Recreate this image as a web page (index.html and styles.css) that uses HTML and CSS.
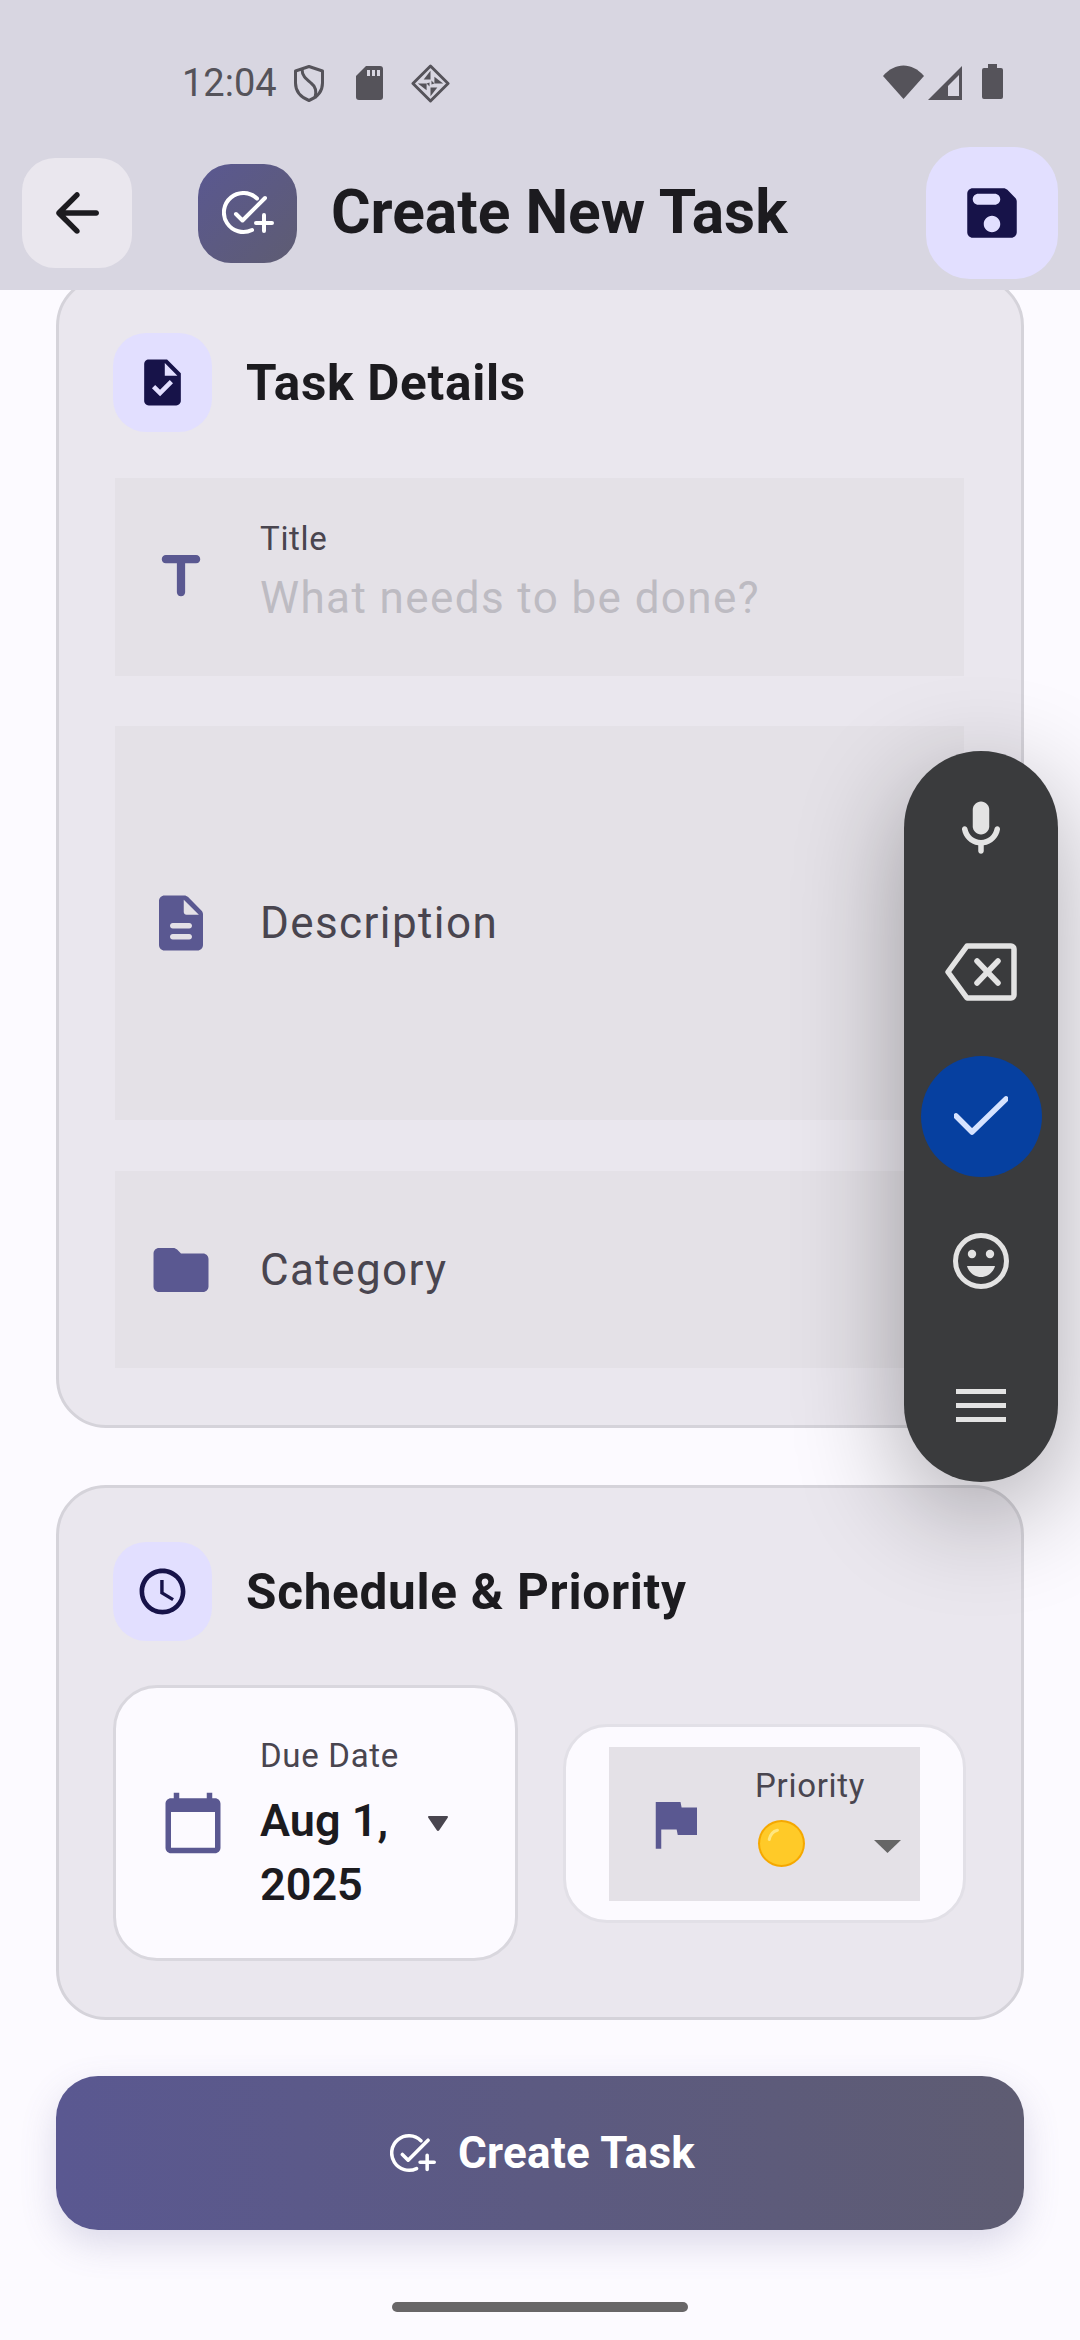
FILE: index.html
```html
<!DOCTYPE html>
<html lang="en">
<head>
  <meta charset="UTF-8">
  <title>Create New Task</title>
  <link rel="stylesheet" href="styles.css">
</head>
<body>
  <header class="top">
    <div class="status">
      <span class="clock">12:04</span>
      <svg class="st-shield" viewBox="0 0 30 37"><path d="M15 1.500 28.500 6v12c0 8.500-6 14.500-13.500 17.500C7.500 32.500 1.500 26.500 1.500 18V6Z" fill="none" stroke="#55535a" stroke-width="3" stroke-linejoin="round"/><path d="M8 4c0 7 4 10 9 14 4 3 6 8 4 15" fill="none" stroke="#55535a" stroke-width="3"/></svg>
      <svg class="st-sd" viewBox="0 0 27 34"><path d="M10 0h14a3 3 0 0 1 3 3v28a3 3 0 0 1-3 3H3a3 3 0 0 1-3-3V10Z" fill="#55535a"/><path d="M11 4h3v6h-3zM16 4h3v6h-3zM21 4h3v6h-3z" fill="#d8d6e1"/></svg>
      <svg class="st-diamond" viewBox="0 0 40 40"><path d="M20 2 38 20 20 38 2 20Z" fill="none" stroke="#55535a" stroke-width="3" stroke-linejoin="round"/><path d="M20 7v9h-7ZM33 20h-9v-7ZM20 33v-9h7ZM7 20h9v7Z" fill="#55535a"/><path d="M21 17l3 3-3 1ZM19 23l-3-3 3-1Z" fill="#55535a"/></svg>
      <span class="status-gap"></span>
      <svg class="st-wifi" viewBox="0 0 41 34"><path d="M0 11C12-3 29-3 41 11L20.500 34Z" fill="#55535a"/></svg>
      <svg class="st-signal" viewBox="0 0 34 34"><path d="M34 0v34H0Z" fill="#55535a"/><path d="M20 20 31 9v21H20Z" fill="#d8d6e1"/></svg>
      <svg class="st-battery" viewBox="0 0 21 35"><path d="M6 0h9v4h4a2 2 0 0 1 2 2v27a2 2 0 0 1-2 2H2a2 2 0 0 1-2-2V6a2 2 0 0 1 2-2h4Z" fill="#55535a"/></svg>
    </div>
    <div class="toolbar">
      <div class="back">
        <svg class="ic66" viewBox="0 0 24 24"><path fill="#1c1b1f" d="M19 11H7.830l4.880-4.880c.39-.39.39-1.030 0-1.420-.39-.39-1.020-.39-1.410 0l-6.590 6.590c-.39.39-.39 1.020 0 1.410l6.590 6.590c.39.39 1.020.39 1.410 0 .39-.39.39-1.020 0-1.410L7.830 13H19c.55 0 1-.45 1-1s-.45-1-1-1z"/></svg>
      </div>
      <div class="logo">
        <svg class="add-task" viewBox="0 0 52 44"><path d="M35 7.500A19.500 19.500 0 1 0 30 39M14 23l6.500 6.500L43 7M34 32h16M42 24v16" fill="none" stroke="#fff" stroke-width="4" stroke-linecap="round" stroke-linejoin="round"/></svg>
      </div>
      <h1 class="page-title">Create New Task</h1>
      <div class="save">
        <svg class="ic66" viewBox="0 0 24 24"><path fill="#171349" d="M17.590 3.590c-.38-.38-.89-.59-1.420-.59H5c-1.110 0-2 .9-2 2v14c0 1.100.9 2 2 2h14c1.100 0 2-.9 2-2V7.830c0-.53-.21-1.040-.59-1.410l-2.820-2.830zM12 19c-1.660 0-3-1.340-3-3s1.340-3 3-3 3 1.340 3 3-1.340 3-3 3zm1-10H7c-1.100 0-2-.9-2-2s.9-2 2-2h6c1.100 0 2 .9 2 2s-.9 2-2 2z"/></svg>
      </div>
    </div>
  </header>

  <main class="content">
    <section class="card card-details">
      <div class="card-head">
        <div class="head-icon">
          <svg class="ic55" viewBox="0 0 24 24"><path fill="#171349" d="M14 2H6c-1.100 0-1.990.9-1.990 2L4 20c0 1.100.89 2 1.990 2H18c1.100 0 2-.9 2-2V8l-6-6zm-3.060 16L7.400 14.460l1.410-1.410 2.120 2.120 4.240-4.240 1.410 1.410L10.940 18zM13 9V3.500L18.500 9H13z"/></svg>
        </div>
        <h2>Task Details</h2>
      </div>

      <div class="field field-title">
        <svg class="ic66 field-icon" viewBox="0 0 24 24"><path d="M5 5.500C5 6.330 5.670 7 6.500 7h4v10.500c0 .83.67 1.500 1.500 1.500s1.500-.67 1.500-1.500V7h4c.83 0 1.500-.67 1.500-1.500S18.330 4 17.500 4h-11C5.670 4 5 4.670 5 5.500z"/></svg>
        <div class="title-text">
          <div class="small-label">Title</div>
          <div class="hint">What needs to be done?</div>
        </div>
      </div>

      <div class="field field-desc">
        <svg class="ic66 field-icon" viewBox="0 0 24 24"><path d="M14.590 2.590c-.38-.38-.89-.59-1.420-.59H6c-1.100 0-2 .9-2 2v16c0 1.100.89 2 1.990 2H18c1.100 0 2-.9 2-2V8.830c0-.53-.21-1.040-.59-1.410l-4.820-4.830zM15 18H9c-.55 0-1-.45-1-1s.45-1 1-1h6c.55 0 1 .45 1 1s-.45 1-1 1zm0-4H9c-.55 0-1-.45-1-1s.45-1 1-1h6c.55 0 1 .45 1 1s-.45 1-1 1zm-2-6V3.500L18.500 9H14c-.55 0-1-.45-1-1z"/></svg>
        <div class="field-text">Description</div>
      </div>

      <div class="field field-cat">
        <svg class="ic66 field-icon" viewBox="0 0 24 24"><path d="M10.590 4.590C10.210 4.210 9.700 4 9.170 4H4c-1.100 0-1.990.9-1.990 2L2 18c0 1.100.9 2 2 2h16c1.100 0 2-.9 2-2V8c0-1.100-.9-2-2-2h-8l-1.410-1.410z"/></svg>
        <div class="field-text">Category</div>
      </div>
    </section>

    <section class="card card-schedule">
      <div class="card-head">
        <div class="head-icon">
          <svg class="ic55" viewBox="0 0 24 24"><path fill="#171349" d="M11.990 2C6.470 2 2 6.480 2 12s4.470 10 9.990 10C17.520 22 22 17.520 22 12S17.520 2 11.990 2zM12 20c-4.420 0-8-3.580-8-8s3.580-8 8-8 8 3.580 8 8-3.580 8-8 8zm.5-13H11v6l5.250 3.150.75-1.230-4.500-2.670z"/></svg>
        </div>
        <h2>Schedule &amp; Priority</h2>
      </div>

      <div class="pick-row">
        <div class="pick pick-date">
          <svg class="ic66 date-icon" viewBox="0 0 24 24"><path fill="#5a5891" d="M20 3h-1V1h-2v2H7V1H5v2H4c-1.100 0-2 .9-2 2v16c0 1.100.9 2 2 2h16c1.100 0 2-.9 2-2V5c0-1.100-.9-2-2-2zm0 18H4V8h16v13z"/></svg>
          <div class="date-text">
            <div class="small-label">Due Date</div>
            <div class="date-value">Aug 1, 2025</div>
          </div>
          <svg class="date-arrow" viewBox="0 0 20 15"><path fill="#49454f" d="M1 0h18c1 0 1.300 1 .7 1.700l-8.500 12.600c-.6.900-1.800.9-2.400 0L.3 1.700C-.3 1 0 0 1 0z"/></svg>
        </div>

        <div class="pick pick-priority">
          <div class="priority-box">
            <svg class="ic66 flag-icon" viewBox="0 0 24 24"><path fill="#5a5891" d="M14.400 6 14 4H5v17h2v-7h5.600l.4 2h7V6z"/></svg>
            <div class="priority-text">
              <div class="small-label">Priority</div>
              <svg class="dot" viewBox="0 0 48 48"><circle cx="24" cy="24" r="23" fill="#f5a800"/><circle cx="24" cy="24" r="21" fill="#ffca28"/><path d="M12 20c1-5 4-8 8-9" fill="none" stroke="#ffe680" stroke-width="3" stroke-linecap="round"/></svg>
            </div>
            <svg class="priority-arrow" viewBox="0 0 27 13"><path fill="#666" d="M0 0h27L13.500 13Z"/></svg>
          </div>
        </div>
      </div>
    </section>

    <div class="create-btn">
      <svg class="add-task create-icon" viewBox="0 0 52 44"><path d="M35 7.500A19.500 19.500 0 1 0 30 39M14 23l6.500 6.500L43 7M34 32h16M42 24v16" fill="none" stroke="#fff" stroke-width="4" stroke-linecap="round" stroke-linejoin="round"/></svg>
      <span>Create Task</span>
    </div>

    <div class="home-bar"></div>
  </main>

  <!-- floating keyboard toolbar -->
  <aside class="kb-pill">
    <div class="kb-item">
      <svg class="ic66 kb-mic" viewBox="0 0 24 24"><path fill="#e3e3e3" d="M12 14c1.660 0 3-1.340 3-3V5c0-1.660-1.340-3-3-3S9 3.340 9 5v6c0 1.660 1.340 3 3 3z"/><path fill="#e3e3e3" d="M17.910 11c-.49 0-.9.360-.98.850C16.520 14.200 14.470 16 12 16s-4.520-1.800-4.930-4.150c-.08-.49-.49-.85-.98-.85-.61 0-1.090.54-1 1.140.49 3 2.890 5.350 5.910 5.780V20c0 .55.45 1 1 1s1-.45 1-1v-2.080c3.020-.43 5.420-2.780 5.910-5.780.1-.6-.39-1.140-1-1.140z"/></svg>
    </div>
    <div class="kb-item">
      <svg class="kb-back" viewBox="0 0 72 58"><path d="M22 3h44a3 3 0 0 1 3 3v46a3 3 0 0 1-3 3H22L3 29Z" fill="none" stroke="#e3e3e3" stroke-width="5.500" stroke-linejoin="round"/><path d="M32 18l21 22M53 18 32 40" fill="none" stroke="#e3e3e3" stroke-width="5.500" stroke-linecap="round"/></svg>
    </div>
    <div class="kb-item">
      <div class="kb-check">
        <svg class="kb-check-icon" viewBox="0 0 54 40"><path d="M2 20 18 36 52 3" fill="none" stroke="#d6e3ff" stroke-width="5.500" stroke-linecap="round" stroke-linejoin="round"/></svg>
      </div>
    </div>
    <div class="kb-item">
      <svg class="kb-smile" viewBox="0 0 56 56"><circle cx="28" cy="28" r="25.500" fill="none" stroke="#e3e3e3" stroke-width="5"/><circle cx="19" cy="21" r="4.200" fill="#e3e3e3"/><circle cx="37" cy="21" r="4.200" fill="#e3e3e3"/><path d="M14 33h28c-2 7-8 11-14 11s-12-4-14-11z" fill="#e3e3e3"/></svg>
    </div>
    <div class="kb-item">
      <div class="kb-menu"><span></span><span></span><span></span></div>
    </div>
  </aside>
</body>
</html>
```

FILE: styles.css
```css
* {
  box-sizing: border-box;
}

body {
  margin: 0;
  width: 1080px;
  height: 2340px;
  overflow: hidden;
  position: relative;
  background: #fcfaff;
  font-family: Roboto, sans-serif;
  color: #1c1b1f;
}

svg {
  display: block;
  flex-shrink: 0;
}

.ic66 {
  width: 66px;
  height: 66px;
}

.ic55 {
  width: 55px;
  height: 55px;
}

.add-task {
  width: 52px;
  height: 44px;
}

/* top bar */
.top {
  position: relative;
  z-index: 2;
  height: 290px;
  background: #d8d6e1;
}

.status {
  height: 136px;
  padding: 64px 77px 0 182px;
  display: flex;
  align-items: flex-start;
}

.clock {
  font-size: 38px;
  line-height: 38px;
  color: #55535a;
  margin-right: 17px;
}

.st-shield {
  width: 30px;
  height: 37px;
  margin-top: 1px;
  margin-right: 32px;
}

.st-sd {
  width: 27px;
  height: 34px;
  margin-top: 2px;
  margin-right: 28px;
}

.st-diamond {
  width: 39px;
  height: 39px;
}

.status-gap {
  flex: 1;
}

.st-wifi {
  width: 41px;
  height: 34px;
  margin-top: 1px;
  margin-right: 4px;
}

.st-signal {
  width: 34px;
  height: 34px;
  margin-top: 2px;
  margin-right: 20px;
}

.st-battery {
  width: 21px;
  height: 35px;
}

.toolbar {
  height: 154px;
  padding: 0 22px;
  display: flex;
  align-items: center;
}

.back {
  width: 110px;
  height: 110px;
  border-radius: 33px;
  background: #eae7ee;
  display: flex;
  align-items: center;
  justify-content: center;
  margin-right: 66px;
}

.logo {
  width: 99px;
  height: 99px;
  border-radius: 33px;
  background: linear-gradient(135deg, #5a5891, #5e5c72);
  display: flex;
  align-items: center;
  justify-content: center;
  margin-right: 34px;
}

.page-title {
  flex: 1;
  margin: 0;
  font-size: 60.500px;
  line-height: 72px;
  font-weight: 700;
  color: #1c1b1f;
}

.save {
  width: 132px;
  height: 132px;
  border-radius: 44px;
  background: #e2dfff;
  display: flex;
  align-items: center;
  justify-content: center;
}

/* cards */
.content {
  margin-top: -14px;
  padding: 0 56px;
}

.card {
  background: #eae7ee;
  border: 3px solid #d5d3da;
  border-radius: 50px;
  padding: 54px;
}

.card-details {
  height: 1152px;
}

.card-schedule {
  height: 535px;
  margin-top: 57px;
}

.card-head {
  display: flex;
  align-items: center;
  height: 99px;
}

.head-icon {
  width: 99px;
  height: 99px;
  border-radius: 33px;
  background: #e2dfff;
  display: flex;
  align-items: center;
  justify-content: center;
  margin-right: 34px;
}

.card-head h2 {
  margin: 0;
  font-size: 49.500px;
  line-height: 60px;
  letter-spacing: 0.7px;
  font-weight: 700;
  color: #1c1b1f;
}

/* text fields */
.field {
  margin: 0 3px 0 2px;
  background: #e4e1e7;
  padding-left: 33px;
  display: flex;
  align-items: center;
}

.field-title {
  height: 198px;
  margin-top: 46px;
}

.field-desc {
  height: 394px;
  margin-top: 50px;
}

.field-cat {
  height: 197px;
  margin-top: 51px;
}

.field-icon {
  fill: #5a5891;
  margin-right: 46px;
}

.title-text {
  padding-bottom: 9px;
}

.small-label {
  font-size: 33px;
  line-height: 44px;
  letter-spacing: 0.7px;
  color: #49454f;
}

.hint {
  font-size: 44px;
  line-height: 60px;
  letter-spacing: 1.4px;
  color: #bdbbc2;
  margin-top: 7px;
}

.field-text {
  font-size: 44px;
  line-height: 60px;
  letter-spacing: 1.4px;
  color: #49454f;
}

/* date and priority */
.pick-row {
  display: grid;
  grid-template-columns: 405px 403px;
  column-gap: 45px;
  align-items: center;
  margin-top: 44px;
  height: 276px;
}

.pick {
  background: #fcfaff;
  border: 3px solid #d9d7de;
  border-radius: 44px;
}

.pick-date {
  height: 276px;
  padding-left: 44px;
  display: flex;
  align-items: center;
}

.date-icon {
  margin-right: 34px;
}

.date-text {
  width: 150px;
  margin-right: 18px;
  padding-top: 5px;
}

.date-value {
  font-size: 45px;
  line-height: 64px;
  font-weight: 600;
  color: #1c1b1f;
  margin-top: 11px;
}

.date-arrow {
  width: 20px;
  height: 15px;
}

.pick-priority {
  height: 199px;
  padding: 20px 43px 19px 43px;
  border-color: #e2e0e7;
}

.priority-box {
  height: 154px;
  background: #e4e1e7;
  position: relative;
  padding-left: 33px;
  display: flex;
  align-items: center;
}

.flag-icon {
  margin-right: 47px;
}

.priority-text {
  padding-bottom: 16px;
}

.dot {
  width: 49px;
  height: 49px;
  margin-top: 11px;
  margin-left: 2px;
}

/* the dropdown caret sits over the grey box */
.priority-arrow {
  position: absolute;
  right: 19px;
  top: 93px;
  width: 27px;
  height: 13px;
}

/* main button */
.create-btn {
  height: 154px;
  margin-top: 56px;
  padding-left: 5px;
  border-radius: 42px;
  background: linear-gradient(90deg, #5a5891, #5e5c72);
  box-shadow: 0 14px 36px rgba(90, 88, 145, 0.2);
  color: #fff;
  display: flex;
  align-items: center;
  justify-content: center;
  font-size: 44px;
  letter-spacing: 0.3px;
  font-weight: 700;
}

.create-icon {
  width: 46px;
  height: 39px;
  margin-right: 22px;
}

.home-bar {
  width: 296px;
  height: 10px;
  margin: 72px auto 0;
  border-radius: 5px;
  background: #686668;
}

/* floating keyboard toolbar, lies over the cards */
.kb-pill {
  position: absolute;
  z-index: 3;
  left: 904px;
  top: 751px;
  width: 154px;
  height: 731px;
  padding: 4px 0;
  border-radius: 77px;
  background: #3a3b3d;
  box-shadow: 0 30px 110px rgba(0, 0, 0, 0.32);
}

.kb-item {
  height: 144.500px;
  display: flex;
  align-items: center;
  justify-content: center;
}

.kb-mic {
  margin-top: 3px;
}

.kb-back {
  width: 72px;
  height: 58px;
}

.kb-check {
  width: 121px;
  height: 121px;
  border-radius: 50%;
  background: #0640a0;
  display: flex;
  align-items: center;
  justify-content: center;
}

.kb-check-icon {
  width: 54px;
  height: 40px;
}

.kb-smile {
  width: 56px;
  height: 56px;
}

.kb-menu {
  width: 50px;
}

.kb-menu span {
  display: block;
  height: 5px;
  background: #e3e3e3;
  margin-bottom: 9px;
}

.kb-menu span:last-child {
  margin-bottom: 0;
}
```
